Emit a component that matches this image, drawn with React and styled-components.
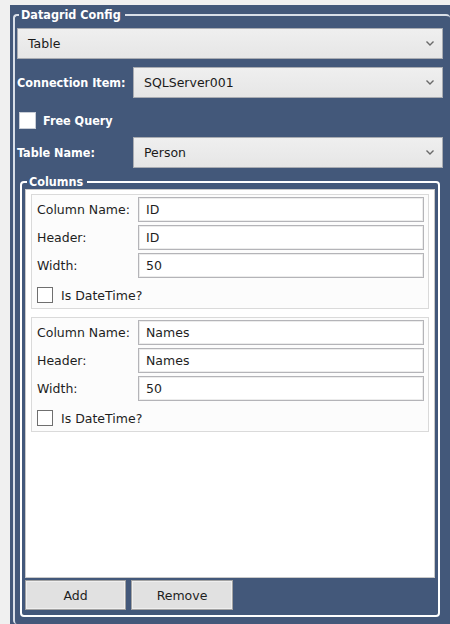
import React from "react";
import styled, { createGlobalStyle } from "styled-components";

const GlobalStyle = createGlobalStyle`
  html, body {
    margin: 0;
    padding: 0;
    background: #f0f0f0;
    font-family: "DejaVu Sans", "Liberation Sans", sans-serif;
    font-size: 12px;
  }
  * { box-sizing: border-box; }
`;

const Page = styled.div`
  padding: 5px 0 0 10px;
  height: 624px;
  overflow: hidden;
`;

const Panel = styled.div`
  background: #43587a;
  height: 100%;
  padding: 3px 0 0 3px;
`;

const Group = styled.fieldset`
  margin: 0;
  padding: ${(p) => p.$pad || "6px 7px 0 2px"};
  border: 2px solid ${(p) => p.$line || "#d9dfe8"};
  border-radius: 4px;
  min-width: 0;
  ${(p) => (p.$open ? "border-right: none; border-bottom: none; height: 100%;" : "")}
`;

const Legend = styled.legend`
  color: #ffffff;
  font-family: "DejaVu Sans Condensed", "DejaVu Sans", sans-serif;
  font-size: 12.5px;
  font-weight: bold;
  line-height: 14px;
  padding: 0 4px 0 2px;
  margin: 0 0 0 2px;
`;

const Select = styled.div`
  position: relative;
  flex: 1;
  height: 31px;
  display: flex;
  align-items: center;
  padding: 0 0 0 10px;
  background: linear-gradient(#efefef, #e6e6e6);
  border: 1px solid #a9acb2;
  color: #1a1a1a;
  font-size: 12.5px;
  svg {
    position: absolute;
    right: 8px;
    top: 12px;
  }
`;

const Row = styled.div`
  display: flex;
  align-items: center;
  margin-top: ${(p) => p.$mt ?? 8}px;
`;

const Label = styled.label`
  width: ${(p) => p.$w || 116}px;
  flex: none;
  white-space: nowrap;
  color: ${(p) => (p.$dark ? "#1e1e1e" : "#ffffff")};
  font-family: ${(p) =>
    p.$dark ? "inherit" : '"DejaVu Sans Condensed", "DejaVu Sans", sans-serif'};
  font-weight: ${(p) => (p.$dark ? "normal" : "bold")};
  font-size: 12.5px;
`;

const Check = styled.span`
  width: ${(p) => p.$size || 17}px;
  height: ${(p) => p.$size || 17}px;
  flex: none;
  background: #ffffff;
  border: 1px solid ${(p) => (p.$dark ? "#6f6f6f" : "#c8cdd6")};
  margin-left: ${(p) => p.$ml || 0}px;
  margin-right: ${(p) => p.$gap || 7}px;
`;

const List = styled.div`
  height: 389px;
  background: #ffffff;
  border: 1px solid #c9c9c9;
  padding: 4px 5px 0 5px;
  display: flex;
  flex-direction: column;
  gap: 8px;
`;

const Item = styled.div`
  height: 115px;
  background: #fcfcfc;
  border: 1px solid #dadada;
  padding: 2px 4px 0 5px;
  display: flex;
  flex-direction: column;
  gap: 3px;
`;

const Field = styled.div`
  display: flex;
  align-items: center;
`;

const Input = styled.div`
  flex: 1;
  height: 25px;
  background: #ffffff;
  border: 1px solid #b4b4b8;
  box-shadow: inset 0 0 0 1px #ececec;
  display: flex;
  align-items: center;
  padding-left: 7px;
  color: #1e1e1e;
  font-size: 12.5px;
`;

const CheckRow = styled.div`
  display: flex;
  align-items: center;
  margin-top: 6px;
  color: #1e1e1e;
  font-size: 12.5px;
`;

const Buttons = styled.div`
  display: flex;
  gap: 5px;
  margin-top: 2px;
  padding-bottom: 5px;
`;

const Button = styled.button`
  width: ${(p) => p.$w || 101}px;
  height: 30px;
  background: #e1e1e1;
  border: 1px solid #a3a3a3;
  box-shadow: inset 0 0 0 1px #efefef;
  font-family: inherit;
  font-size: 12.5px;
  color: #1e1e1e;
  padding: 0;
`;

const Chevron = () => (
  <svg width="8" height="5" viewBox="0 0 8 5">
    <polyline points="0.5,0.5 4,4 7.5,0.5" fill="none" stroke="#6a6a6a" strokeWidth="1.4" />
  </svg>
);

const columns = [
  { name: "ID", header: "ID", width: "50" },
  { name: "Names", header: "Names", width: "50" },
];

export default function App() {
  return (
    <Page>
      <GlobalStyle />
      <Panel>
        <Group $open>
          <Legend>Datagrid Config</Legend>
          <Row $mt={0}>
            <Select>
              Table
              <Chevron />
            </Select>
          </Row>
          <Row>
            <Label>Connection Item:</Label>
            <Select>
              SQLServer001
              <Chevron />
            </Select>
          </Row>
          <Row $mt={14}>
            <Check $ml={2} $gap={7} />
            <Label>Free Query</Label>
          </Row>
          <Row>
            <Label>Table Name:</Label>
            <Select>
              Person
              <Chevron />
            </Select>
          </Row>
          <Group $line="#ffffff" $pad="0 3px 0 3px" style={{ margin: "7px 3px 0 3px" }}>
            <Legend>Columns</Legend>
            <List>
              {columns.map((c) => (
                <Item key={c.name}>
                  <Field>
                    <Label $dark $w={101}>Column Name:</Label>
                    <Input>{c.name}</Input>
                  </Field>
                  <Field>
                    <Label $dark $w={101}>Header:</Label>
                    <Input>{c.header}</Input>
                  </Field>
                  <Field>
                    <Label $dark $w={101}>Width:</Label>
                    <Input>{c.width}</Input>
                  </Field>
                  <CheckRow>
                    <Check $dark $size={16} $gap={8} />
                    Is DateTime?
                  </CheckRow>
                </Item>
              ))}
            </List>
            <Buttons>
              <Button>Add</Button>
              <Button $w={102}>Remove</Button>
            </Buttons>
          </Group>
        </Group>
      </Panel>
    </Page>
  );
}
